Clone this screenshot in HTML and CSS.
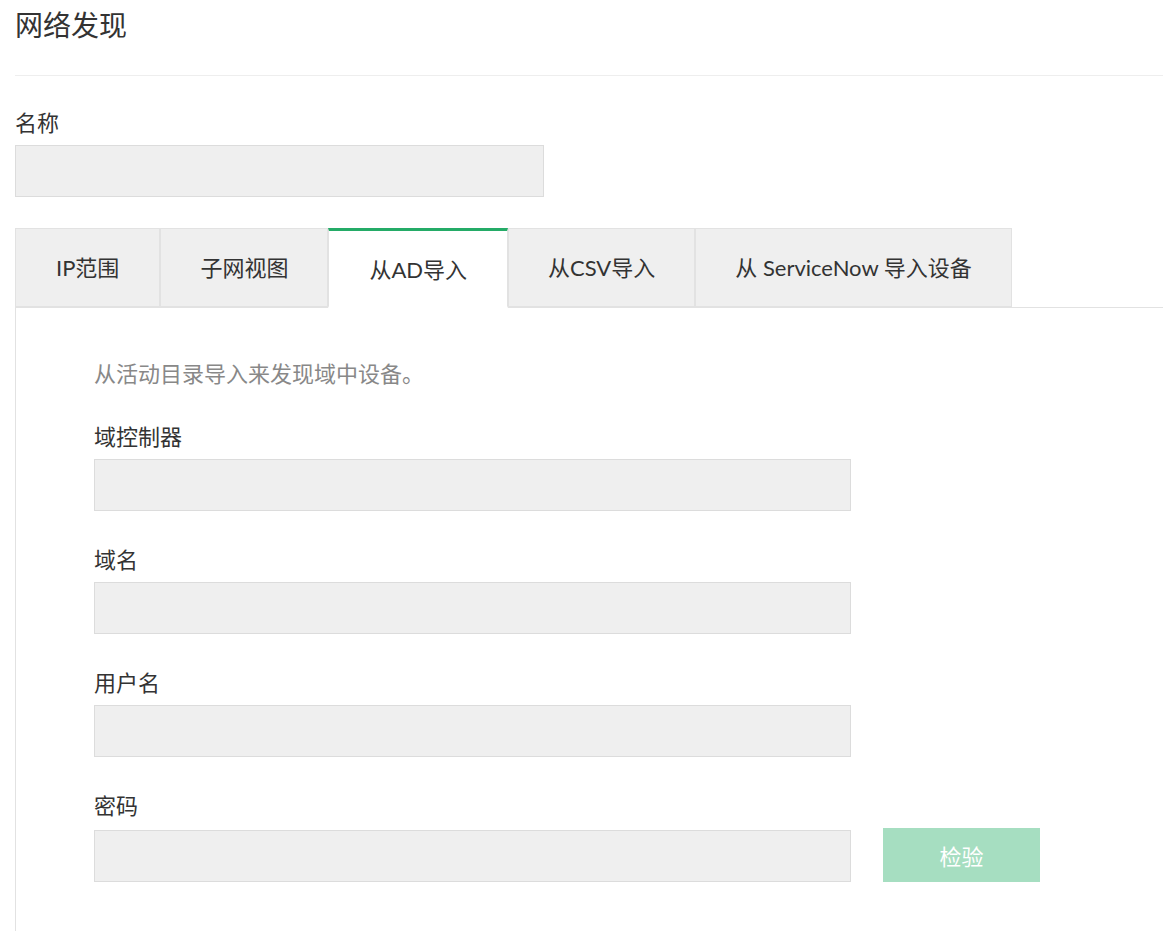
FILE: index.html
```html
<!DOCTYPE html>
<html lang="zh-CN">
<head>
  <meta charset="UTF-8" />
  <meta name="viewport" content="width=device-width, initial-scale=1" />
  <title>网络发现</title>
  <link rel="stylesheet" href="styles.css">
</head>
<body>
  <main class="discovery">
    <h1 class="page-title">网络发现</h1>

    <div class="field name-field">
      <label for="name">名称</label>
      <input type="text" id="name" class="name-input" />
    </div>

    <nav class="tabs" role="tablist">
      <div class="tab" role="tab">IP范围</div>
      <div class="tab" role="tab">子网视图</div>
      <div class="tab active" role="tab" aria-selected="true">从AD导入</div>
      <div class="tab" role="tab">从CSV导入</div>
      <div class="tab" role="tab">从 ServiceNow 导入设备</div>
    </nav>

    <section class="panel" role="tabpanel">
      <p class="hint">从活动目录导入来发现域中设备。</p>

      <div class="field">
        <label for="dc">域控制器</label>
        <input type="text" id="dc" />
      </div>

      <div class="field">
        <label for="domain">域名</label>
        <input type="text" id="domain" />
      </div>

      <div class="field">
        <label for="user">用户名</label>
        <input type="text" id="user" />
      </div>

      <div class="field">
        <label for="pass">密码</label>
        <div class="row">
          <input type="password" id="pass" />
          <button type="button" class="check-btn" disabled>检验</button>
        </div>
      </div>
    </section>
  </main>
</body>
</html>
```

FILE: styles.css
```css
:root {
  --text: #333333;
  --muted: #888888;
  --border: #e2e2e2;
  --input-bg: #efefef;
  --input-border: #dcdcdc;
  --green: #24ab67;
  --green-light: #a6dec1;
  --font: Lato, "Noto Sans CJK SC", sans-serif;
}

* {
  box-sizing: border-box;
}

body {
  margin: 0;
  font-family: var(--font);
  color: var(--text);
  background: #ffffff;
}

.discovery {
  padding-left: 15px;
}

.page-title {
  margin: 0;
  padding: 8px 0 33px;
  font-size: 28px;
  font-weight: 400;
  line-height: 34px;
  border-bottom: 1px solid #eeeeee;
}

.field label {
  display: block;
  font-size: 22px;
  line-height: 30px;
  margin-bottom: 7px;
}

.field input {
  display: block;
  width: 757px;
  height: 52px;
  margin: 0;
  padding: 0 12px;
  background: var(--input-bg);
  border: 1px solid var(--input-border);
  border-radius: 0;
  font-family: var(--font);
  font-size: 18px;
  outline: none;
}

.name-field {
  margin-top: 32px;
}

.name-field .name-input {
  width: 529px;
}

.tabs {
  display: flex;
  margin-top: 31px;
  margin-bottom: -1px;
}

.tab {
  height: 80px;
  padding: 0 39px 3px;
  display: flex;
  align-items: center;
  justify-content: center;
  font-size: 22px;
  background: var(--input-bg);
  border: 1px solid var(--border);
  border-bottom-width: 2px;
  cursor: pointer;
}

.tab:first-child {
  padding: 0 40px 3px;
}

.tab.active {
  background: #ffffff;
  border-top: 3px solid var(--green);
  border-bottom-color: #ffffff;
  padding: 0 40px 1px;
}

.panel {
  border-top: 1px solid var(--border);
  border-left: 1px solid var(--border);
  padding: 51px 0 60px 78px;
}

.hint {
  margin: 0 0 33px;
  font-size: 22px;
  line-height: 30px;
  color: var(--muted);
}

.panel .field + .field {
  margin-top: 34px;
}

.row {
  display: flex;
  align-items: flex-end;
  gap: 32px;
}

.check-btn {
  width: 157px;
  height: 54px;
  border: none;
  background: var(--green-light);
  color: #ffffff;
  font-family: var(--font);
  font-size: 22px;
}
```
